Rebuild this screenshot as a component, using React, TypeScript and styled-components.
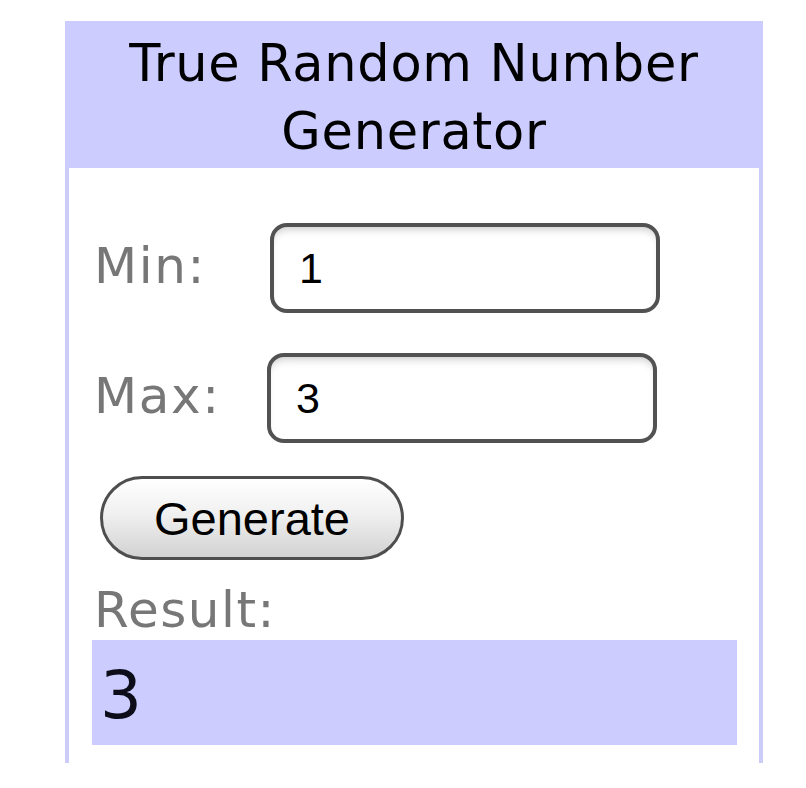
import { useState } from 'react'
import styled, { createGlobalStyle } from 'styled-components'

const GlobalStyle = createGlobalStyle`
  html, body {
    margin: 0;
    padding: 0;
    background: #ffffff;
  }
  body {
    font-family: "DejaVu Sans", Verdana, sans-serif;
  }
`

const Page = styled.div`
  padding: 21px 0 0 65px;
`

const Widget = styled.div`
  width: 698px;
  box-sizing: border-box;
  border-left: 4px solid #ccccf8;
  border-right: 4px solid #ccccf8;
  padding-bottom: 18px;
  background: #ffffff;
`

const Header = styled.h1`
  margin: 0 -4px;
  height: 147px;
  box-sizing: border-box;
  padding-top: 9px;
  background: #ccccff;
  color: #000;
  font-family: "DejaVu Sans", Verdana, sans-serif;
  font-weight: normal;
  font-size: 51px;
  letter-spacing: 0.7px;
  line-height: 68px;
  text-align: center;
`

const Body = styled.div`
  padding: 55px 0 0 25px;
`

const FieldGrid = styled.div`
  display: grid;
  grid-template-columns: 176px 390px;
  row-gap: 40px;
  align-items: center;
`

const Label = styled.label`
  color: #777777;
  font-family: "DejaVu Sans", Verdana, sans-serif;
  font-size: 50px;
  letter-spacing: 1.6px;
  line-height: 57px;
  position: relative;
  top: -2px;
`

interface INumberInput {
  $shift?: number
}
const NumberInput = styled.input<INumberInput>`
  width: 390px;
  height: 90px;
  box-sizing: border-box;
  margin-left: ${p => p.$shift ?? 0}px;
  padding: 0 0 0 25px;
  border: 4px solid #525252;
  border-radius: 17px;
  background: #ffffff;
  box-shadow: inset 0 7px 8px -5px rgba(0, 0, 0, 0.22);
  font-family: "Liberation Sans", Arial, sans-serif;
  font-size: 43px;
  color: #000;
  outline: none;
`

const GenerateButton = styled.button`
  display: block;
  margin: 33px 0 0 6px;
  width: 304px;
  height: 84px;
  box-sizing: border-box;
  border: 3px solid #4e4e4e;
  border-radius: 42px;
  background: linear-gradient(#ffffff 0%, #f0f0f0 45%, #d2d2d2 100%);
  font-family: "Liberation Sans", Arial, sans-serif;
  font-size: 47px;
  color: #000;
  padding: 0;
  cursor: pointer;
`

const ResultLabel = styled.div`
  margin-top: 21px;
  color: #777777;
  font-size: 50px;
  letter-spacing: 1.5px;
  line-height: 58px;
`

const ResultBox = styled.div`
  margin: 1px 0 0 -2px;
  width: 645px;
  height: 105px;
  box-sizing: border-box;
  padding: 6px 0 0 8px;
  background: #ccccff;
  color: #0d0d1a;
  font-size: 66px;
  line-height: 99px;
`

const App = (): JSX.Element => {
  const [min, setMin] = useState('1')
  const [max, setMax] = useState('3')
  const [result, setResult] = useState(3)

  const generate = (): void => {
    const lo = parseInt(min, 10)
    const hi = parseInt(max, 10)
    if (isNaN(lo) || isNaN(hi) || hi < lo) return
    setResult(lo + Math.floor(Math.random() * (hi - lo + 1)))
  }

  return (
    <Page>
      <GlobalStyle />
      <Widget>
        <Header>True Random Number Generator</Header>
        <Body>
          <FieldGrid>
            <Label htmlFor='min'>Min:</Label>
            <NumberInput id='min' value={min} onChange={e => setMin(e.target.value)} />
            <Label htmlFor='max'>Max:</Label>
            <NumberInput id='max' $shift={-3} value={max} onChange={e => setMax(e.target.value)} />
          </FieldGrid>
          <GenerateButton onClick={generate}>Generate</GenerateButton>
          <ResultLabel>Result:</ResultLabel>
          <ResultBox>{result}</ResultBox>
        </Body>
      </Widget>
    </Page>
  )
}

export default App
